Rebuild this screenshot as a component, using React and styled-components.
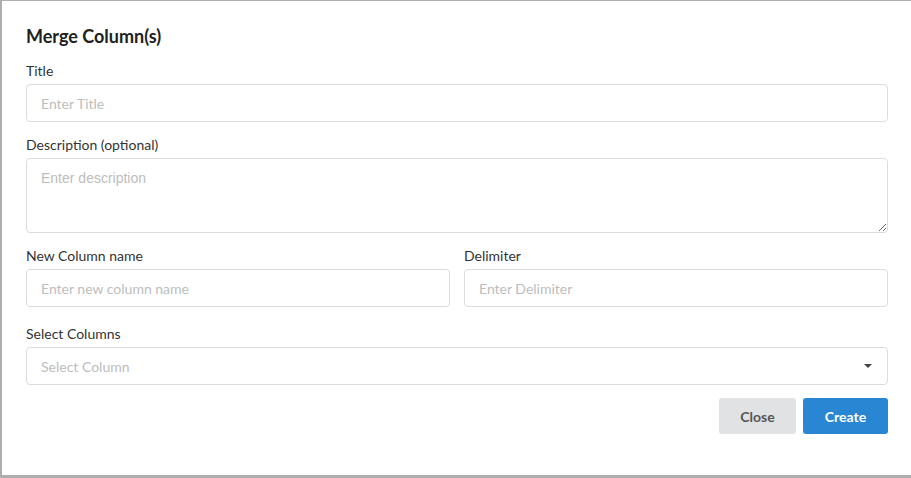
import React from "react";
import styled, { createGlobalStyle } from "styled-components";

const GlobalStyle = createGlobalStyle`
  html, body {
    margin: 0;
    padding: 0;
    background: #adadad;
  }
  body {
    font-family: Lato, "Open Sans", sans-serif;
  }
`;

export default function App() {
  return (
    <>
      <GlobalStyle />
      <Backdrop>
        <Modal>
          <Heading>Merge Column(s)</Heading>
          <Field gap={14}>
            <Label>Title</Label>
            <Input placeholder="Enter Title" />
          </Field>
          <Field gap={14}>
            <Label>Description (optional)</Label>
            <TextArea placeholder="Enter description" />
          </Field>
          <Row>
            <Field>
              <Label>New Column name</Label>
              <Input placeholder="Enter new column name" />
            </Field>
            <Field>
              <Label>Delimiter</Label>
              <Input placeholder="Enter Delimiter" />
            </Field>
          </Row>
          <Field>
            <Label>Select Columns</Label>
            <SelectBox>
              <Placeholder>Select Column</Placeholder>
              <Caret />
            </SelectBox>
          </Field>
          <Footer>
            <Button>Close</Button>
            <Button primary>Create</Button>
          </Footer>
        </Modal>
      </Backdrop>
    </>
  );
}

const Backdrop = styled.div`
  width: 911px;
  height: 478px;
  padding: 1px 0 0 2px;
  box-sizing: border-box;
  overflow: hidden;
`;

const Modal = styled.div`
  width: 909px;
  height: 474px;
  box-sizing: border-box;
  background: #fff;
  padding: 24px 23px 0 24px;
  display: flex;
  flex-direction: column;
`;

const Heading = styled.h2`
  margin: 0 0 15px;
  font-size: 18px;
  line-height: 22px;
  font-weight: 700;
  color: #222;
`;

const Field = styled.div`
  display: flex;
  flex-direction: column;
  margin-bottom: ${(p) => (p.gap ? p.gap : 13)}px;
`;

const Row = styled.div`
  display: flex;
  gap: 14px;
  margin-bottom: 5px;
  & > ${Field} {
    flex: 1;
  }
`;

const Label = styled.label`
  font-size: 14px;
  line-height: 17px;
  color: #333;
  margin-bottom: 5px;
`;

const Input = styled.input`
  height: 38px;
  box-sizing: border-box;
  border: 1px solid #dcdcdc;
  border-radius: 4px;
  padding: 0 14px;
  font-family: Lato, sans-serif;
  font-size: 14px;
  color: #333;
  outline: none;
  &::placeholder {
    color: #bdbdbd;
  }
`;

const TextArea = styled.textarea`
  height: 75px;
  box-sizing: border-box;
  border: 1px solid #dcdcdc;
  border-radius: 4px;
  padding: 11px 14px;
  font-family: "Liberation Sans", Arial, sans-serif;
  font-size: 14px;
  color: #333;
  outline: none;
  resize: vertical;
  &::placeholder {
    color: #bdbdbd;
  }
`;

const SelectBox = styled.div`
  height: 38px;
  box-sizing: border-box;
  border: 1px solid #dcdcdc;
  border-radius: 4px;
  padding: 0 14px;
  display: flex;
  align-items: center;
  justify-content: space-between;
`;

const Placeholder = styled.span`
  font-size: 14px;
  color: #bdbdbd;
`;

const Caret = styled.span`
  width: 0;
  height: 0;
  border-left: 4px solid transparent;
  border-right: 4px solid transparent;
  border-top: 4px solid #444;
  margin-right: 1px;
`;

const Footer = styled.div`
  display: flex;
  justify-content: flex-end;
  gap: 7px;
`;

const Button = styled.button`
  height: 36px;
  min-width: ${(p) => (p.primary ? "85px" : "77px")};
  border: none;
  border-radius: 3px;
  font-family: Lato, sans-serif;
  font-size: 14px;
  font-weight: 700;
  cursor: pointer;
  background: ${(p) => (p.primary ? "#2986d2" : "#e1e2e4")};
  color: ${(p) => (p.primary ? "#fff" : "#555")};
`;
